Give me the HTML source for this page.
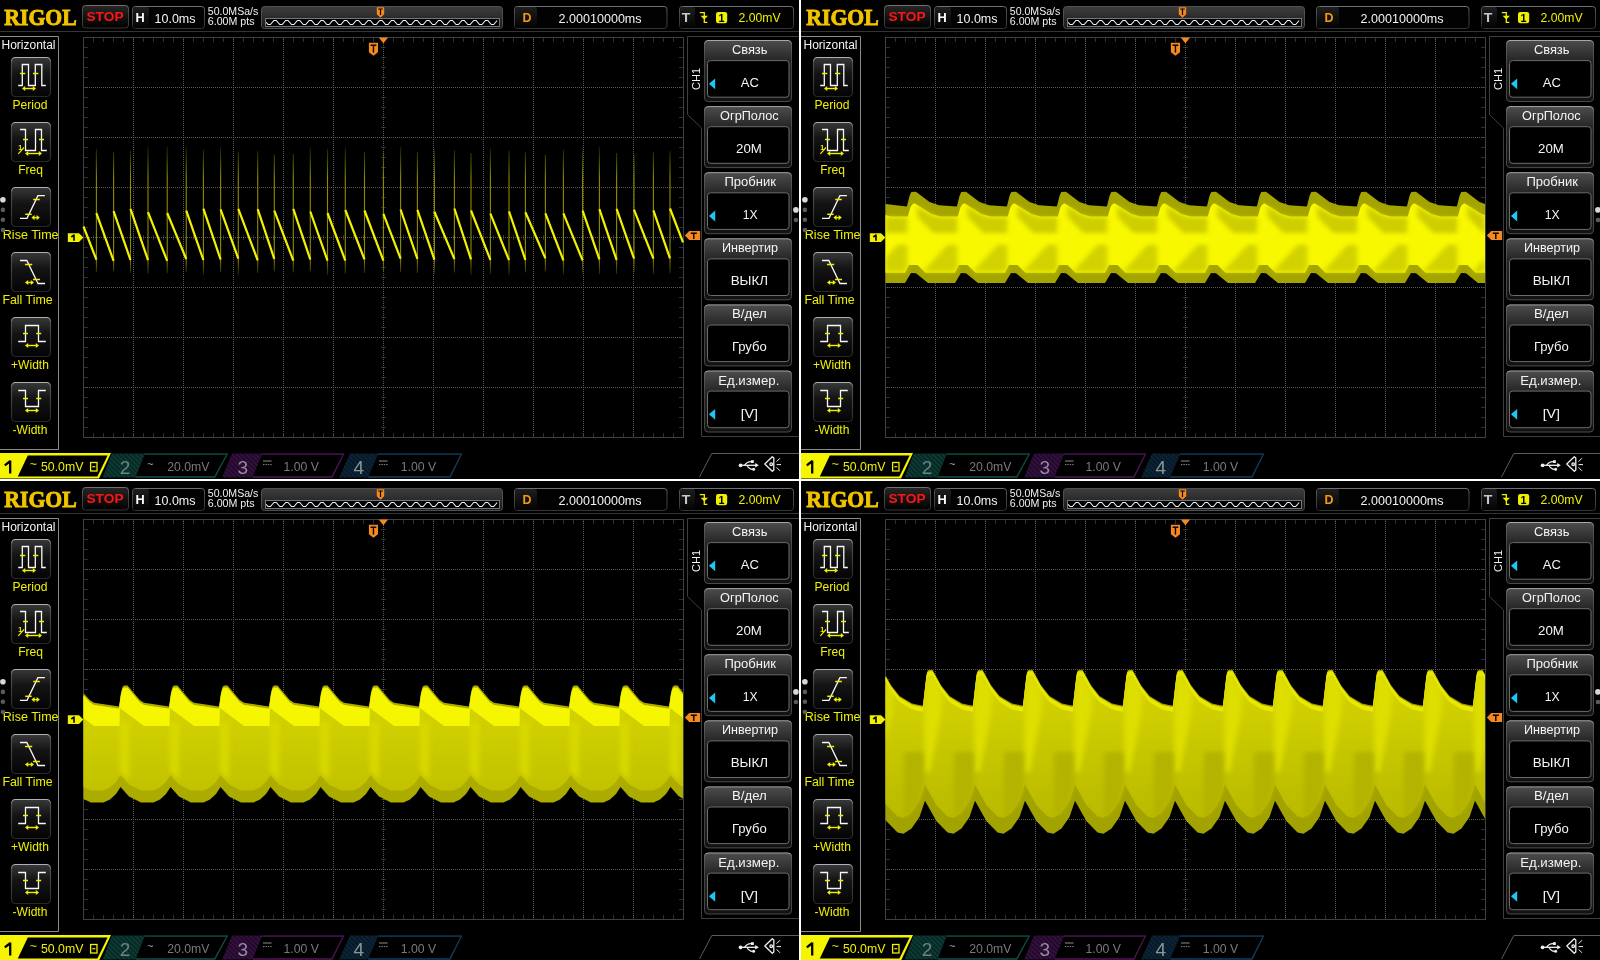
<!DOCTYPE html>
<html><head><meta charset="utf-8"><title>Rigol</title>
<style>html,body{margin:0;padding:0;background:#000;width:1600px;height:960px;overflow:hidden}svg{display:block;opacity:0.999} text.logo{stroke:#f2c400;stroke-width:0.9px}</style>
</head><body>
<svg width="1600" height="960" viewBox="0 0 1600 960" font-family='"Liberation Sans", sans-serif'>
<defs>
<linearGradient id="gBR" gradientUnits="userSpaceOnUse" x1="0" y1="190" x2="0" y2="345"><stop offset="0" stop-color="#d6d600"/><stop offset="1" stop-color="#b8b800"/></linearGradient>
<linearGradient id="gBL" gradientUnits="userSpaceOnUse" x1="0" y1="230" x2="0" y2="315"><stop offset="0" stop-color="#d2d200"/><stop offset="1" stop-color="#c0c000"/></linearGradient>
<linearGradient id="gBox" x1="0" y1="0" x2="0" y2="1"><stop offset="0" stop-color="#262626"/><stop offset="1" stop-color="#000"/></linearGradient>
<linearGradient id="gBoxS" x1="0" y1="0" x2="0" y2="1"><stop offset="0" stop-color="#707070"/><stop offset="0.3" stop-color="#4a4a4a"/><stop offset="1" stop-color="#343434"/></linearGradient>
<linearGradient id="gLbl" x1="0" y1="0" x2="0" y2="1"><stop offset="0" stop-color="#1e1e1e"/><stop offset="1" stop-color="#030303"/></linearGradient>
<linearGradient id="gOv" x1="0" y1="0" x2="0" y2="1"><stop offset="0" stop-color="#3e3e3e"/><stop offset="1" stop-color="#181818"/></linearGradient>
<linearGradient id="gBtn" x1="0" y1="0" x2="0" y2="1"><stop offset="0" stop-color="#383838"/><stop offset="0.4" stop-color="#141414"/><stop offset="1" stop-color="#040404"/></linearGradient>
<linearGradient id="gBtnS" x1="0" y1="0" x2="0" y2="1"><stop offset="0" stop-color="#b0b0b0"/><stop offset="0.12" stop-color="#505050"/><stop offset="1" stop-color="#282828"/></linearGradient>
<linearGradient id="gGrp" x1="0" y1="0" x2="0" y2="1"><stop offset="0" stop-color="#4c4c4c"/><stop offset="0.33" stop-color="#262626"/><stop offset="1" stop-color="#121212"/></linearGradient>
<linearGradient id="gGrpS" x1="0" y1="0" x2="0" y2="1"><stop offset="0" stop-color="#a8a8a8"/><stop offset="0.08" stop-color="#5a5a5a"/><stop offset="0.5" stop-color="#404040"/><stop offset="1" stop-color="#4a4a4a"/></linearGradient>
<pattern id="hatch0" width="3.4" height="4" patternUnits="userSpaceOnUse" patternTransform="rotate(-45)"><rect width="3.4" height="4" fill="#0c3a35"/><rect width="1.4" height="4" fill="#072420"/></pattern>
<pattern id="hatch1" width="3.4" height="4" patternUnits="userSpaceOnUse" patternTransform="rotate(-45)"><rect width="3.4" height="4" fill="#341040"/><rect width="1.4" height="4" fill="#1e0826"/></pattern>
<pattern id="hatch2" width="3.4" height="4" patternUnits="userSpaceOnUse" patternTransform="rotate(-45)"><rect width="3.4" height="4" fill="#0c2438"/><rect width="1.4" height="4" fill="#071624"/></pattern>
<linearGradient id="gSpike" gradientUnits="userSpaceOnUse" x1="0" y1="145" x2="0" y2="278"><stop offset="0" stop-color="#808000" stop-opacity="0.15"/><stop offset="0.25" stop-color="#8c8c00"/><stop offset="0.85" stop-color="#8c8c00"/><stop offset="1" stop-color="#808000" stop-opacity="0.1"/></linearGradient>
<filter id="soft" x="-5%" y="-20%" width="110%" height="140%"><feGaussianBlur stdDeviation="2.5 2"/></filter>
<clipPath id="pc"><rect x="-1" y="-1" width="800" height="480"/></clipPath>

<g id="pstatic"><text x="4.30" y="25.00" font-size="24" fill="#f2c400" font-weight="bold" font-family='"Liberation Serif", serif' textLength="72.40" lengthAdjust="spacingAndGlyphs" stroke="#f2c400" stroke-width="0.9" class="logo">RIGOL</text>
<rect x="82.5" y="5.5" width="46" height="22.5" rx="3" fill="url(#gBox)" stroke="url(#gBoxS)"/>
<text x="86.50" y="21.20" font-size="13.6" fill="#ff1515" font-weight="bold" textLength="37.00" lengthAdjust="spacingAndGlyphs">STOP</text>
<rect x="132.5" y="6.5" width="72" height="22" rx="3" fill="#020202" stroke="url(#gBoxS)"/>
<rect x="133" y="7" width="16" height="21" rx="2" fill="url(#gLbl)"/>
<text x="135.50" y="22.00" font-size="13" fill="#ffffff" font-weight="bold" textLength="9.20" lengthAdjust="spacingAndGlyphs">H</text>
<text x="154.50" y="23.10" font-size="12.4" fill="#f4f4f4" textLength="41.00" lengthAdjust="spacingAndGlyphs">10.0ms</text>
<text x="207.80" y="14.60" font-size="10.2" fill="#f0f0f0" textLength="50.50" lengthAdjust="spacingAndGlyphs">50.0MSa/s</text>
<text x="207.80" y="25.30" font-size="10.2" fill="#f0f0f0" textLength="46.80" lengthAdjust="spacingAndGlyphs">6.00M pts</text>
<rect x="261.5" y="6.5" width="241" height="22" rx="3" fill="url(#gOv)" stroke="#505050"/>
<rect x="265.5" y="18.5" width="234" height="8" fill="#000" stroke="#707884"/>
<polyline fill="none" stroke="#f4f4f4" stroke-width="1.1" points="266.20,22.30 268.05,24.50 270.45,24.50 273.93,20.50 276.32,20.50 279.80,24.50 282.20,24.50 285.68,20.50 288.07,20.50 291.55,24.50 293.95,24.50 297.43,20.50 299.82,20.50 303.30,24.50 305.70,24.50 309.18,20.50 311.57,20.50 315.05,24.50 317.45,24.50 320.93,20.50 323.32,20.50 326.80,24.50 329.20,24.50 332.68,20.50 335.07,20.50 338.55,24.50 340.95,24.50 344.43,20.50 346.82,20.50 350.30,24.50 352.70,24.50 356.18,20.50 358.57,20.50 362.05,24.50 364.45,24.50 367.93,20.50 370.32,20.50 373.80,24.50 376.20,24.50 379.68,20.50 382.07,20.50 385.55,24.50 387.95,24.50 391.43,20.50 393.82,20.50 397.30,24.50 399.70,24.50 403.18,20.50 405.57,20.50 409.05,24.50 411.45,24.50 414.93,20.50 417.32,20.50 420.80,24.50 423.20,24.50 426.68,20.50 429.07,20.50 432.55,24.50 434.95,24.50 438.43,20.50 440.82,20.50 444.30,24.50 446.70,24.50 450.18,20.50 452.57,20.50 456.05,24.50 458.45,24.50 461.93,20.50 464.32,20.50 467.80,24.50 470.20,24.50 473.68,20.50 476.07,20.50 479.55,24.50 481.95,24.50 485.43,20.50 487.82,20.50 491.30,24.50 493.70,24.50 497.18,20.50"/>
<path d="M376.8 7.2 H384.2 V14.2 L380.5 17.8 L376.8 14.2 Z" fill="#f5891f"/>
<path d="M378.2 9 H382.8 M380.5 9 V15" stroke="#000" stroke-width="1.2"/>
<rect x="514.5" y="6.5" width="152.5" height="22" rx="3" fill="#020202" stroke="url(#gBoxS)"/>
<rect x="515" y="7" width="22" height="21" rx="2" fill="url(#gLbl)"/>
<text x="522.60" y="21.80" font-size="13" fill="#f59a10" font-weight="bold" textLength="9.00" lengthAdjust="spacingAndGlyphs">D</text>
<text x="558.60" y="22.90" font-size="12.4" fill="#f4f4f4" textLength="83.00" lengthAdjust="spacingAndGlyphs">2.00010000ms</text>
<rect x="679.5" y="6.5" width="114" height="22" rx="3" fill="#020202" stroke="url(#gBoxS)"/>
<rect x="680" y="7" width="15" height="21" rx="2" fill="url(#gLbl)"/>
<text x="681.80" y="21.80" font-size="13" fill="#c8c8c8" font-weight="bold" textLength="8.60" lengthAdjust="spacingAndGlyphs">T</text>
<path d="M699.8 12.7 H704.3 V22.4 H707.3" fill="none" stroke="#f0f000" stroke-width="1.3"/>
<path d="M700.6 15.8 H708 L704.3 19.6 Z" fill="#f0f000"/>
<rect x="716" y="12" width="11.2" height="11.2" rx="2.2" fill="#f0f000"/>
<text x="718.60" y="21.80" font-size="11" fill="#000" font-weight="bold" textLength="6.00" lengthAdjust="spacingAndGlyphs">1</text>
<text x="738.60" y="22.20" font-size="12.4" fill="#f0f000" textLength="42.00" lengthAdjust="spacingAndGlyphs">2.00mV</text>
<path d="M-1 31.5 H799" stroke="#343434" stroke-width="1"/>
<path d="M-1 36.5 H58.5 V449.5 H-1" fill="none" stroke="#8a8a8a" stroke-width="1"/>
<text x="1.50" y="49.00" font-size="12" fill="#f4f4f4" textLength="54.00" lengthAdjust="spacingAndGlyphs">Horizontal</text>
<rect x="11.5" y="57.5" width="39" height="39" rx="4" fill="url(#gBtn)" stroke="url(#gBtnS)" stroke-width="1.2"/>
<text x="12.50" y="109.00" font-size="12" fill="#f0f000" textLength="34.90" lengthAdjust="spacingAndGlyphs">Period</text>
<rect x="11.5" y="122.5" width="39" height="39" rx="4" fill="url(#gBtn)" stroke="url(#gBtnS)" stroke-width="1.2"/>
<text x="18.20" y="174.00" font-size="12" fill="#f0f000" textLength="24.80" lengthAdjust="spacingAndGlyphs">Freq</text>
<rect x="11.5" y="187.5" width="39" height="39" rx="4" fill="url(#gBtn)" stroke="url(#gBtnS)" stroke-width="1.2"/>
<text x="2.80" y="239.00" font-size="12" fill="#f0f000" textLength="55.80" lengthAdjust="spacingAndGlyphs">Rise Time</text>
<rect x="11.5" y="252.5" width="39" height="39" rx="4" fill="url(#gBtn)" stroke="url(#gBtnS)" stroke-width="1.2"/>
<text x="2.40" y="304.00" font-size="12" fill="#f0f000" textLength="50.30" lengthAdjust="spacingAndGlyphs">Fall Time</text>
<rect x="11.5" y="317.5" width="39" height="39" rx="4" fill="url(#gBtn)" stroke="url(#gBtnS)" stroke-width="1.2"/>
<text x="11.10" y="369.00" font-size="12" fill="#f0f000" textLength="37.80" lengthAdjust="spacingAndGlyphs">+Width</text>
<rect x="11.5" y="382.5" width="39" height="39" rx="4" fill="url(#gBtn)" stroke="url(#gBtnS)" stroke-width="1.2"/>
<text x="12.60" y="434.00" font-size="12" fill="#f0f000" textLength="34.80" lengthAdjust="spacingAndGlyphs">-Width</text>
<path d="M18.2 85.5 H22.3 V64.5 H28.5 V85.5 H35.3 V64.5 H41.8 V85.5 H45.8" fill="none" stroke="#f8f8f8" stroke-width="1.3" stroke-linejoin="miter"/>
<path d="M20 73.5 H25.3" stroke="#f0f000" stroke-width="1.5"/>
<path d="M33 73.5 H38.3" stroke="#f0f000" stroke-width="1.5"/>
<path d="M24 88.5 H34" stroke="#f0f000" stroke-width="1.4"/>
<path d="M22 88.5 L25.2 85.9 V91.1 Z M36 88.5 L32.8 85.9 V91.1 Z" fill="#f0f000"/>
<path d="M20 129.5 H25.5 V150.5 H35.5 V129.5 H41.5 V150.5 H46.8" fill="none" stroke="#f8f8f8" stroke-width="1.3" stroke-linejoin="miter"/>
<path d="M23 139.5 H28" stroke="#f0f000" stroke-width="1.5"/>
<path d="M39 139.5 H44" stroke="#f0f000" stroke-width="1.5"/>
<path d="M27 153.5 H40" stroke="#f0f000" stroke-width="1.4"/>
<path d="M25 153.5 L28.2 150.9 V156.1 Z M42 153.5 L38.8 150.9 V156.1 Z" fill="#f0f000"/>
<path d="M18.3 153.8 L24 147.5" stroke="#f0f000" stroke-width="1.2"/>
<text x="18.20" y="149.50" font-size="7" fill="#f0f000" font-weight="bold" textLength="4.00" lengthAdjust="spacingAndGlyphs">1</text>
<path d="M20 218.3 H27 L37.9 195.7 H44.9" fill="none" stroke="#f8f8f8" stroke-width="1.3" stroke-linejoin="miter"/>
<path d="M33.2 199.5 H39.8" stroke="#f0f000" stroke-width="1.5"/>
<path d="M25.2 214.3 H31.7" stroke="#f0f000" stroke-width="1.5"/>
<path d="M33.4 217.6 H37.8" stroke="#f0f000" stroke-width="1.4"/>
<path d="M31.4 217.6 L34.6 215.0 V220.2 Z M39.8 217.6 L36.599999999999994 215.0 V220.2 Z" fill="#f0f000"/>
<path d="M20 260.5 H26.8 L38 283.5 H45" fill="none" stroke="#f8f8f8" stroke-width="1.3" stroke-linejoin="miter"/>
<path d="M25 264.5 H32.2" stroke="#f0f000" stroke-width="1.5"/>
<path d="M33 279.5 H40" stroke="#f0f000" stroke-width="1.5"/>
<path d="M27 282.5 H32" stroke="#f0f000" stroke-width="1.4"/>
<path d="M25 282.5 L28.2 279.9 V285.1 Z M34 282.5 L30.8 279.9 V285.1 Z" fill="#f0f000"/>
<path d="M18.2 341.5 H25.5 V325.5 H38.5 V341.5 H45.8" fill="none" stroke="#f8f8f8" stroke-width="1.3" stroke-linejoin="miter"/>
<path d="M23 333.5 H28" stroke="#f0f000" stroke-width="1.5"/>
<path d="M36.2 333.5 H41.2" stroke="#f0f000" stroke-width="1.5"/>
<path d="M27 345.5 H37" stroke="#f0f000" stroke-width="1.4"/>
<path d="M25 345.5 L28.2 342.9 V348.1 Z M39 345.5 L35.8 342.9 V348.1 Z" fill="#f0f000"/>
<path d="M18.2 390.5 H25.5 V406.5 H38.5 V390.5 H45.8" fill="none" stroke="#f8f8f8" stroke-width="1.3" stroke-linejoin="miter"/>
<path d="M23 398.5 H28" stroke="#f0f000" stroke-width="1.5"/>
<path d="M36.2 398.5 H41.2" stroke="#f0f000" stroke-width="1.5"/>
<path d="M27 410.5 H37" stroke="#f0f000" stroke-width="1.4"/>
<path d="M25 410.5 L28.2 407.9 V413.1 Z M39 410.5 L35.8 407.9 V413.1 Z" fill="#f0f000"/>
<circle cx="2.9" cy="199.7" r="2.8" fill="#d8d8d8"/>
<circle cx="2.9" cy="209.9" r="2.3" fill="#5a5a5a"/>
<circle cx="2.9" cy="219.8" r="2.3" fill="#5a5a5a"/>
<circle cx="2.9" cy="230" r="2.3" fill="#5a5a5a"/>
<path d="M93.5 38 V42 M93.5 433 V437 M103.5 38 V42 M103.5 433 V437 M113.5 38 V42 M113.5 433 V437 M123.5 38 V42 M123.5 433 V437 M133.5 38 V42 M133.5 433 V437 M143.5 38 V42 M143.5 433 V437 M153.5 38 V42 M153.5 433 V437 M163.5 38 V42 M163.5 433 V437 M173.5 38 V42 M173.5 433 V437 M183.5 38 V42 M183.5 433 V437 M193.5 38 V42 M193.5 433 V437 M203.5 38 V42 M203.5 433 V437 M213.5 38 V42 M213.5 433 V437 M223.5 38 V42 M223.5 433 V437 M233.5 38 V42 M233.5 433 V437 M243.5 38 V42 M243.5 433 V437 M253.5 38 V42 M253.5 433 V437 M263.5 38 V42 M263.5 433 V437 M273.5 38 V42 M273.5 433 V437 M283.5 38 V42 M283.5 433 V437 M293.5 38 V42 M293.5 433 V437 M303.5 38 V42 M303.5 433 V437 M313.5 38 V42 M313.5 433 V437 M323.5 38 V42 M323.5 433 V437 M333.5 38 V42 M333.5 433 V437 M343.5 38 V42 M343.5 433 V437 M353.5 38 V42 M353.5 433 V437 M363.5 38 V42 M363.5 433 V437 M373.5 38 V42 M373.5 433 V437 M383.5 38 V42 M383.5 433 V437 M393.5 38 V42 M393.5 433 V437 M403.5 38 V42 M403.5 433 V437 M413.5 38 V42 M413.5 433 V437 M423.5 38 V42 M423.5 433 V437 M433.5 38 V42 M433.5 433 V437 M443.5 38 V42 M443.5 433 V437 M453.5 38 V42 M453.5 433 V437 M463.5 38 V42 M463.5 433 V437 M473.5 38 V42 M473.5 433 V437 M483.5 38 V42 M483.5 433 V437 M493.5 38 V42 M493.5 433 V437 M503.5 38 V42 M503.5 433 V437 M513.5 38 V42 M513.5 433 V437 M523.5 38 V42 M523.5 433 V437 M533.5 38 V42 M533.5 433 V437 M543.5 38 V42 M543.5 433 V437 M553.5 38 V42 M553.5 433 V437 M563.5 38 V42 M563.5 433 V437 M573.5 38 V42 M573.5 433 V437 M583.5 38 V42 M583.5 433 V437 M593.5 38 V42 M593.5 433 V437 M603.5 38 V42 M603.5 433 V437 M613.5 38 V42 M613.5 433 V437 M623.5 38 V42 M623.5 433 V437 M633.5 38 V42 M633.5 433 V437 M643.5 38 V42 M643.5 433 V437 M653.5 38 V42 M653.5 433 V437 M663.5 38 V42 M663.5 433 V437 M673.5 38 V42 M673.5 433 V437 M84 47.5 H88 M679 47.5 H683 M84 57.5 H88 M679 57.5 H683 M84 67.5 H88 M679 67.5 H683 M84 77.5 H88 M679 77.5 H683 M84 87.5 H88 M679 87.5 H683 M84 97.5 H88 M679 97.5 H683 M84 107.5 H88 M679 107.5 H683 M84 117.5 H88 M679 117.5 H683 M84 127.5 H88 M679 127.5 H683 M84 137.5 H88 M679 137.5 H683 M84 147.5 H88 M679 147.5 H683 M84 157.5 H88 M679 157.5 H683 M84 167.5 H88 M679 167.5 H683 M84 177.5 H88 M679 177.5 H683 M84 187.5 H88 M679 187.5 H683 M84 197.5 H88 M679 197.5 H683 M84 207.5 H88 M679 207.5 H683 M84 217.5 H88 M679 217.5 H683 M84 227.5 H88 M679 227.5 H683 M84 237.5 H88 M679 237.5 H683 M84 247.5 H88 M679 247.5 H683 M84 257.5 H88 M679 257.5 H683 M84 267.5 H88 M679 267.5 H683 M84 277.5 H88 M679 277.5 H683 M84 287.5 H88 M679 287.5 H683 M84 297.5 H88 M679 297.5 H683 M84 307.5 H88 M679 307.5 H683 M84 317.5 H88 M679 317.5 H683 M84 327.5 H88 M679 327.5 H683 M84 337.5 H88 M679 337.5 H683 M84 347.5 H88 M679 347.5 H683 M84 357.5 H88 M679 357.5 H683 M84 367.5 H88 M679 367.5 H683 M84 377.5 H88 M679 377.5 H683 M84 387.5 H88 M679 387.5 H683 M84 397.5 H88 M679 397.5 H683 M84 407.5 H88 M679 407.5 H683 M84 417.5 H88 M679 417.5 H683 M84 427.5 H88 M679 427.5 H683 M93.5 235 V240 M103.5 235 V240 M113.5 235 V240 M123.5 235 V240 M133.5 235 V240 M143.5 235 V240 M153.5 235 V240 M163.5 235 V240 M173.5 235 V240 M183.5 235 V240 M193.5 235 V240 M203.5 235 V240 M213.5 235 V240 M223.5 235 V240 M233.5 235 V240 M243.5 235 V240 M253.5 235 V240 M263.5 235 V240 M273.5 235 V240 M283.5 235 V240 M293.5 235 V240 M303.5 235 V240 M313.5 235 V240 M323.5 235 V240 M333.5 235 V240 M343.5 235 V240 M353.5 235 V240 M363.5 235 V240 M373.5 235 V240 M383.5 235 V240 M393.5 235 V240 M403.5 235 V240 M413.5 235 V240 M423.5 235 V240 M433.5 235 V240 M443.5 235 V240 M453.5 235 V240 M463.5 235 V240 M473.5 235 V240 M483.5 235 V240 M493.5 235 V240 M503.5 235 V240 M513.5 235 V240 M523.5 235 V240 M533.5 235 V240 M543.5 235 V240 M553.5 235 V240 M563.5 235 V240 M573.5 235 V240 M583.5 235 V240 M593.5 235 V240 M603.5 235 V240 M613.5 235 V240 M623.5 235 V240 M633.5 235 V240 M643.5 235 V240 M653.5 235 V240 M663.5 235 V240 M673.5 235 V240 M381 47.5 H386 M381 57.5 H386 M381 67.5 H386 M381 77.5 H386 M381 87.5 H386 M381 97.5 H386 M381 107.5 H386 M381 117.5 H386 M381 127.5 H386 M381 137.5 H386 M381 147.5 H386 M381 157.5 H386 M381 167.5 H386 M381 177.5 H386 M381 187.5 H386 M381 197.5 H386 M381 207.5 H386 M381 217.5 H386 M381 227.5 H386 M381 237.5 H386 M381 247.5 H386 M381 257.5 H386 M381 267.5 H386 M381 277.5 H386 M381 287.5 H386 M381 297.5 H386 M381 307.5 H386 M381 317.5 H386 M381 327.5 H386 M381 337.5 H386 M381 347.5 H386 M381 357.5 H386 M381 367.5 H386 M381 377.5 H386 M381 387.5 H386 M381 397.5 H386 M381 407.5 H386 M381 417.5 H386 M381 427.5 H386" stroke="#2e2e2e" stroke-width="1"/>
<path d="M133.5 39 V437 M183.5 39 V437 M233.5 39 V437 M283.5 39 V437 M333.5 39 V437 M383.5 39 V437 M433.5 39 V437 M483.5 39 V437 M533.5 39 V437 M583.5 39 V437 M633.5 39 V437 M85 87.5 H683 M85 137.5 H683 M85 187.5 H683 M85 237.5 H683 M85 287.5 H683 M85 337.5 H683 M85 387.5 H683" stroke="#5a5a5a" stroke-width="1" stroke-dasharray="1 1"/>
<rect x="83.5" y="37.5" width="600" height="400" fill="none" stroke="#404040"/>
<path d="M799 36.5 H687.5 V114.5 L701.5 128 V436.5 H799" fill="none" stroke="#3e3e3e" stroke-width="1"/>
<text x="0" y="0" font-size="11.5" fill="#f4f4f4" textLength="22.2" lengthAdjust="spacingAndGlyphs" transform="translate(700.2,90) rotate(-90)">CH1</text>
<rect x="704.5" y="40.50" width="87" height="61" rx="3.5" fill="url(#gGrp)" stroke="url(#gGrpS)"/>
<rect x="707.5" y="60.60" width="81.5" height="36.6" rx="3" fill="#000" stroke="#6c6c6c"/>
<text x="731.90" y="54.00" font-size="12.6" fill="#f4f4f4" textLength="35.60" lengthAdjust="spacingAndGlyphs">Связь</text>
<text x="740.70" y="87.00" font-size="12.6" fill="#f4f4f4" textLength="18.10" lengthAdjust="spacingAndGlyphs">AC</text>
<path d="M715.2 78.40 L708.9 83.80 L715.2 89.20 Z" fill="#1ec6f2"/>
<rect x="704.5" y="106.60" width="87" height="61" rx="3.5" fill="url(#gGrp)" stroke="url(#gGrpS)"/>
<rect x="707.5" y="126.70" width="81.5" height="36.6" rx="3" fill="#000" stroke="#6c6c6c"/>
<text x="720.10" y="120.10" font-size="12.6" fill="#f4f4f4" textLength="58.60" lengthAdjust="spacingAndGlyphs">ОгрПолос</text>
<text x="736.10" y="153.10" font-size="12.6" fill="#f4f4f4" textLength="25.80" lengthAdjust="spacingAndGlyphs">20M</text>
<rect x="704.5" y="172.70" width="87" height="61" rx="3.5" fill="url(#gGrp)" stroke="url(#gGrpS)"/>
<rect x="707.5" y="192.80" width="81.5" height="36.6" rx="3" fill="#000" stroke="#6c6c6c"/>
<text x="724.40" y="186.20" font-size="12.6" fill="#f4f4f4" textLength="51.60" lengthAdjust="spacingAndGlyphs">Пробник</text>
<text x="742.70" y="219.20" font-size="12.6" fill="#f4f4f4" textLength="14.90" lengthAdjust="spacingAndGlyphs">1X</text>
<path d="M715.2 210.60 L708.9 216.00 L715.2 221.40 Z" fill="#1ec6f2"/>
<rect x="704.5" y="238.80" width="87" height="61" rx="3.5" fill="url(#gGrp)" stroke="url(#gGrpS)"/>
<rect x="707.5" y="258.90" width="81.5" height="36.6" rx="3" fill="#000" stroke="#6c6c6c"/>
<text x="721.90" y="252.30" font-size="12.6" fill="#f4f4f4" textLength="56.20" lengthAdjust="spacingAndGlyphs">Инвертир</text>
<text x="730.65" y="285.30" font-size="12.6" fill="#f4f4f4" textLength="37.45" lengthAdjust="spacingAndGlyphs">ВЫКЛ</text>
<rect x="704.5" y="304.90" width="87" height="61" rx="3.5" fill="url(#gGrp)" stroke="url(#gGrpS)"/>
<rect x="707.5" y="325.00" width="81.5" height="36.6" rx="3" fill="#000" stroke="#6c6c6c"/>
<text x="731.90" y="318.40" font-size="12.6" fill="#f4f4f4" textLength="34.95" lengthAdjust="spacingAndGlyphs">В/дел</text>
<text x="731.90" y="351.40" font-size="12.6" fill="#f4f4f4" textLength="34.95" lengthAdjust="spacingAndGlyphs">Грубо</text>
<rect x="704.5" y="371.00" width="87" height="61" rx="3.5" fill="url(#gGrp)" stroke="url(#gGrpS)"/>
<rect x="707.5" y="391.10" width="81.5" height="36.6" rx="3" fill="#000" stroke="#6c6c6c"/>
<text x="718.15" y="384.50" font-size="12.6" fill="#f4f4f4" textLength="61.20" lengthAdjust="spacingAndGlyphs">Ед.измер.</text>
<text x="740.65" y="417.50" font-size="12.6" fill="#f4f4f4" textLength="17.45" lengthAdjust="spacingAndGlyphs">[V]</text>
<path d="M715.2 408.90 L708.9 414.30 L715.2 419.70 Z" fill="#1ec6f2"/>
<circle cx="795.9" cy="209.9" r="2.8" fill="#d8d8d8"/>
<circle cx="795.9" cy="220" r="2.3" fill="#5a5a5a"/>
<path d="M-1 453 H111 L99 478.6 H-1 Z" fill="#f5f500"/>
<path d="M27.8 455.6 H107.6 L97.4 476.6 H17.8 Z" fill="#000"/>
<path d="M10.2 460.6 V473.6 M4.8 465.4 L10.4 461" stroke="#000" stroke-width="2.3" fill="none"/>
<text x="29.60" y="467.50" font-size="11" fill="#f0f000" textLength="7.50" lengthAdjust="spacingAndGlyphs">~</text>
<text x="41.00" y="470.60" font-size="12.2" fill="#f0f000" textLength="42.40" lengthAdjust="spacingAndGlyphs">50.0mV</text>
<rect x="90.6" y="462.5" width="6.4" height="8.5" fill="none" stroke="#f0f000" stroke-width="1.3"/>
<path d="M92.3 466.7 H95.3" stroke="#f0f000" stroke-width="1.2"/>
<path d="M111.8 453.5 H227.75 L215.2 477.6 H102.6 Z" fill="url(#hatch0)"/>
<path d="M144.6 454.6 H226.55 L214.2 476.5 H135.9 Z" fill="#000"/>
<path d="M144.6 454.2 H227.15 L214.79999999999998 477 H135.9" fill="none" stroke="#0e4a43" stroke-width="1.3"/>
<text x="119.70" y="473.80" font-size="18.5" fill="#6c8480" textLength="10.60" lengthAdjust="spacingAndGlyphs">2</text>
<text x="147.00" y="468.00" font-size="10" fill="#a0a0a0" textLength="6.50" lengthAdjust="spacingAndGlyphs">~</text>
<text x="167.30" y="470.90" font-size="12.3" fill="#7a7a7a" textLength="42.20" lengthAdjust="spacingAndGlyphs">20.0mV</text>
<path d="M232.0 453.5 H344.0 L332.4 477.6 H222.1 Z" fill="url(#hatch1)"/>
<path d="M262.0 454.6 H342.8 L331.4 476.5 H252.8 Z" fill="#000"/>
<path d="M262.0 454.2 H343.4 L332.0 477 H252.8" fill="none" stroke="#4a1450" stroke-width="1.3"/>
<text x="237.60" y="473.80" font-size="18.5" fill="#948aa0" textLength="10.60" lengthAdjust="spacingAndGlyphs">3</text>
<path d="M263.0 461 H271.6" stroke="#8c8c8c" stroke-width="1"/>
<path d="M263.0 464.6 H271.6" stroke="#8c8c8c" stroke-width="1" stroke-dasharray="1.4 1"/>
<text x="283.50" y="470.90" font-size="12.3" fill="#7a7a7a" textLength="35.40" lengthAdjust="spacingAndGlyphs">1.00 V</text>
<path d="M350.0 453.5 H462.0 L450.4 477.6 H339.1 Z" fill="url(#hatch2)"/>
<path d="M378.0 454.6 H460.8 L449.4 476.5 H368.4 Z" fill="#000"/>
<path d="M378.0 454.2 H461.4 L450.0 477 H368.4" fill="none" stroke="#123a5a" stroke-width="1.3"/>
<text x="353.60" y="473.80" font-size="18.5" fill="#889898" textLength="10.60" lengthAdjust="spacingAndGlyphs">4</text>
<path d="M379.0 461 H387.6" stroke="#8c8c8c" stroke-width="1"/>
<path d="M379.0 464.6 H387.6" stroke="#8c8c8c" stroke-width="1" stroke-dasharray="1.4 1"/>
<text x="400.75" y="470.90" font-size="12.3" fill="#7a7a7a" textLength="35.40" lengthAdjust="spacingAndGlyphs">1.00 V</text>
<path d="M699.5 477 L711.8 453.5 H799" fill="none" stroke="#5c5c5c" stroke-width="1"/>
<g fill="#f0f0f0" stroke="#f0f0f0"><path d="M741 465.3 H756" stroke-width="1.3" fill="none"/><circle cx="740.6" cy="465.3" r="1.9" stroke="none"/><path d="M755.2 463 L758.8 465.3 L755.2 467.6 Z" stroke="none"/><path d="M744.5 465.3 Q747 461.6 751 461.6" fill="none" stroke-width="1.2"/><rect x="751" y="460.2" width="2.8" height="2.8" stroke="none"/><path d="M747 465.3 Q749 469.4 752.5 469.4" fill="none" stroke-width="1.2"/><circle cx="753.6" cy="469.3" r="1.5" stroke="none"/></g>
<g fill="none" stroke="#f0f0f0" stroke-width="1.3"><path d="M764.8 464 L772.3 456.8 L773.8 458 V470 L772.3 471.3 Z" stroke-linejoin="round"/><circle cx="771.2" cy="464.2" r="1.3"/><path d="M776.6 461.6 L780 458.2 M776.6 464.6 H781 M776.6 467.4 L780 470.8" stroke-width="1"/></g></g>
<g id="pmark"><path d="M378.7 37.6 H388.1 L383.4 43.2 Z" fill="#f5891f"/>
<path d="M368.9 42.8 H378 V52.3 L373.45 55.8 L368.9 52.3 Z" fill="#f5891f"/>
<path d="M370.6 45.3 H376.3 M373.45 45.3 V52.5" stroke="#000" stroke-width="1.4"/>
<path d="M67.8 233.2 H79 L83.4 237.6 L79 242 H67.8 Z" fill="#f0f000"/>
<path d="M74 234.6 V240.8 M71.3 237 L74.2 234.8" stroke="#000" stroke-width="1.6" fill="none"/>
<path d="M684.9 235.4 L689.2 230.9 H700.1 V239.9 H689.2 Z" fill="#f5891f"/>
<path d="M690.8 233.2 H696.8 M693.8 233.2 V239" stroke="#000" stroke-width="1.4"/></g>
</defs>
<rect width="1600" height="960" fill="#000"/>
<g transform="translate(0,0)" clip-path="url(#pc)">
<use href="#pstatic"/>
<path d="M96.40 148.9 V271.8 M113.60 151.9 V271.4 M130.50 150.8 V272.8 M148.00 146.5 V273.5 M167.20 146.3 V273.2 M186.25 146.6 V271.5 M203.40 149.8 V275.1 M220.60 147.1 V272.1 M238.30 151.6 V275.7 M257.70 151.2 V273.0 M274.30 154.8 V271.2 M293.30 153.7 V272.4 M310.30 147.3 V271.6 M327.50 148.8 V275.1 M345.30 147.6 V273.9 M364.50 151.8 V272.9 M383.40 150.9 V271.3 M400.60 146.5 V272.0 M417.40 152.1 V273.1 M434.40 148.8 V273.9 M454.40 150.1 V272.5 M471.00 153.1 V274.5 M490.40 148.2 V273.9 M509.00 150.7 V275.4 M525.40 152.6 V272.4 M545.40 154.8 V271.6 M563.40 149.8 V274.8 M582.60 147.4 V273.4 M599.40 146.4 V274.3 M616.60 152.9 V273.9 M634.00 153.9 V272.6 M653.40 152.3 V274.0 M670.00 151.2 V273.3" stroke="url(#gSpike)" stroke-width="1.1" fill="none"/>
<path d="M83.5 226.5 L96.4 259.7 M96.40 213.1 L113.60 260.8 M113.60 211.1 L130.50 260.0 M130.50 208.8 L148.00 260.1 M148.00 212.1 L167.20 260.9 M167.20 213.0 L186.25 259.0 M186.25 210.6 L203.40 260.0 M203.40 208.6 L220.60 259.5 M220.60 209.4 L238.30 258.6 M238.30 208.8 L257.70 260.3 M257.70 209.2 L274.30 258.9 M274.30 210.7 L293.30 260.6 M293.30 208.9 L310.30 259.5 M310.30 211.5 L327.50 260.6 M327.50 213.0 L345.30 260.5 M345.30 210.0 L364.50 259.4 M364.50 210.5 L383.40 260.6 M383.40 213.8 L400.60 258.7 M400.60 209.5 L417.40 258.9 M417.40 209.8 L434.40 259.6 M434.40 211.7 L454.40 259.0 M454.40 208.5 L471.00 259.4 M471.00 210.5 L490.40 259.8 M490.40 213.7 L509.00 260.1 M509.00 211.3 L525.40 259.9 M525.40 212.2 L545.40 258.4 M545.40 213.4 L563.40 260.3 M563.40 213.3 L582.60 260.4 M582.60 210.7 L599.40 259.3 M599.40 209.1 L616.60 259.9 M616.60 208.8 L634.00 258.5 M634.00 209.6 L653.40 258.7 M653.40 210.4 L670.00 258.4 M670.00 208.5 L683.00 242.3" stroke="#f2f200" stroke-width="2.2" fill="none" stroke-linecap="butt"/>
<use href="#pmark"/>
</g>
<g transform="translate(802,0)" clip-path="url(#pc)">
<use href="#pstatic"/>
<clipPath id="bclip1"><path d="M83.5 204.1L104.5 206.6L105 206L107.5 195.9L109 192.6L109.5 192L114 191.7L127.5 202L137 205.3L154.5 206.6L155 206L157.5 195.9L159 192.6L159.5 192L164 191.7L177.5 202L187 205.3L204.5 206.6L205 206L207.5 195.9L209 192.6L209.5 192L214 191.7L227.5 202L237 205.3L254.5 206.6L255 206L257.5 195.9L259 192.6L259.5 192L264 191.7L277.5 202L287 205.3L304.5 206.6L305 206L307.5 195.9L309 192.6L309.5 192L314 191.7L327.5 202L337 205.3L354.5 206.6L355 206L357.5 195.9L359 192.6L359.5 192L364 191.7L377.5 202L387 205.3L404.5 206.6L405 206L407.5 195.9L409 192.6L409.5 192L414 191.7L427.5 202L437 205.3L454.5 206.6L455 206L457.5 195.9L459 192.6L459.5 192L464 191.7L477.5 202L487 205.3L504.5 206.6L505 206L507.5 195.9L509 192.6L509.5 192L514 191.7L527.5 202L537 205.3L554.5 206.6L555 206L557.5 195.9L559 192.6L559.5 192L564 191.7L577.5 202L587 205.3L604.5 206.6L605 206L607.5 195.9L609 192.6L609.5 192L614 191.7L627.5 202L637 205.3L654.5 206.6L655 206L657.5 195.9L659 192.6L659.5 192L664 191.7L677.5 202L683 203.9L683 283.1L676 283.1L664 273.3L659 273.1L653 283.1L626 283.1L614 273.3L609 273.1L603 283.1L576 283.1L564 273.3L559 273.1L553 283.1L526 283.1L514 273.3L509 273.1L503 283.1L476 283.1L464 273.3L459 273.1L453 283.1L426 283.1L414 273.3L409 273.1L403 283.1L376 283.1L364 273.3L359 273.1L353 283.1L326 283.1L314 273.3L309 273.1L303 283.1L276 283.1L264 273.3L259 273.1L253 283.1L226 283.1L214 273.3L209 273.1L203 283.1L176 283.1L164 273.3L159 273.1L153 283.1L126 283.1L114 273.3L109 273.1L103 283.1L83.5 283.1Z"/></clipPath>
<path d="M83.5 204.1L104.5 206.6L105 206L107.5 195.9L109 192.6L109.5 192L114 191.7L127.5 202L137 205.3L154.5 206.6L155 206L157.5 195.9L159 192.6L159.5 192L164 191.7L177.5 202L187 205.3L204.5 206.6L205 206L207.5 195.9L209 192.6L209.5 192L214 191.7L227.5 202L237 205.3L254.5 206.6L255 206L257.5 195.9L259 192.6L259.5 192L264 191.7L277.5 202L287 205.3L304.5 206.6L305 206L307.5 195.9L309 192.6L309.5 192L314 191.7L327.5 202L337 205.3L354.5 206.6L355 206L357.5 195.9L359 192.6L359.5 192L364 191.7L377.5 202L387 205.3L404.5 206.6L405 206L407.5 195.9L409 192.6L409.5 192L414 191.7L427.5 202L437 205.3L454.5 206.6L455 206L457.5 195.9L459 192.6L459.5 192L464 191.7L477.5 202L487 205.3L504.5 206.6L505 206L507.5 195.9L509 192.6L509.5 192L514 191.7L527.5 202L537 205.3L554.5 206.6L555 206L557.5 195.9L559 192.6L559.5 192L564 191.7L577.5 202L587 205.3L604.5 206.6L605 206L607.5 195.9L609 192.6L609.5 192L614 191.7L627.5 202L637 205.3L654.5 206.6L655 206L657.5 195.9L659 192.6L659.5 192L664 191.7L677.5 202L683 203.9L683 283.1L676 283.1L664 273.3L659 273.1L653 283.1L626 283.1L614 273.3L609 273.1L603 283.1L576 283.1L564 273.3L559 273.1L553 283.1L526 283.1L514 273.3L509 273.1L503 283.1L476 283.1L464 273.3L459 273.1L453 283.1L426 283.1L414 273.3L409 273.1L403 283.1L376 283.1L364 273.3L359 273.1L353 283.1L326 283.1L314 273.3L309 273.1L303 283.1L276 283.1L264 273.3L259 273.1L253 283.1L226 283.1L214 273.3L209 273.1L203 283.1L176 283.1L164 273.3L159 273.1L153 283.1L126 283.1L114 273.3L109 273.1L103 283.1L83.5 283.1Z" fill="#a4a400"/>
<path d="M83.5 215.1L88.5 216.5L105.5 216.5L106 215.8L108.5 207L110.5 204.2L112.5 203.2L129.5 214L138.5 216.5L155.5 216.5L156 215.8L158.5 207L160.5 204.2L162.5 203.2L179.5 214L188.5 216.5L205.5 216.5L206 215.8L208.5 207L210.5 204.2L212.5 203.2L229.5 214L238.5 216.5L255.5 216.5L256 215.8L258.5 207L260.5 204.2L262.5 203.2L279.5 214L288.5 216.5L305.5 216.5L306 215.8L308.5 207L310.5 204.2L312.5 203.2L329.5 214L338.5 216.5L355.5 216.5L356 215.8L358.5 207L360.5 204.2L362.5 203.2L379.5 214L388.5 216.5L405.5 216.5L406 215.8L408.5 207L410.5 204.2L412.5 203.2L429.5 214L438.5 216.5L455.5 216.5L456 215.8L458.5 207L460.5 204.2L462.5 203.2L479.5 214L488.5 216.5L505.5 216.5L506 215.8L508.5 207L510.5 204.2L512.5 203.2L529.5 214L538.5 216.5L555.5 216.5L556 215.8L558.5 207L560.5 204.2L562.5 203.2L579.5 214L588.5 216.5L605.5 216.5L606 215.8L608.5 207L610.5 204.2L612.5 203.2L629.5 214L638.5 216.5L655.5 216.5L656 215.8L658.5 207L660.5 204.2L662.5 203.2L679.5 214L683 215L683 272.8L673.5 272.8L665.5 265L657 265L653 272.8L623.5 272.8L615.5 265L607 265L603 272.8L573.5 272.8L565.5 265L557 265L553 272.8L523.5 272.8L515.5 265L507 265L503 272.8L473.5 272.8L465.5 265L457 265L453 272.8L423.5 272.8L415.5 265L407 265L403 272.8L373.5 272.8L365.5 265L357 265L353 272.8L323.5 272.8L315.5 265L307 265L303 272.8L273.5 272.8L265.5 265L257 265L253 272.8L223.5 272.8L215.5 265L207 265L203 272.8L173.5 272.8L165.5 265L157 265L153 272.8L123.5 272.8L115.5 265L107 265L103 272.8L83.5 272.8Z" fill="#f8f800"/>
<g clip-path="url(#bclip1)"><path d="M83.5 216.1L88.5 217.5L105.5 217.5L106 216.8L108.5 208L110.5 205.2L112.5 204.2L129.5 215L138.5 217.5L155.5 217.5L156 216.8L158.5 208L160.5 205.2L162.5 204.2L179.5 215L188.5 217.5L205.5 217.5L206 216.8L208.5 208L210.5 205.2L212.5 204.2L229.5 215L238.5 217.5L255.5 217.5L256 216.8L258.5 208L260.5 205.2L262.5 204.2L279.5 215L288.5 217.5L305.5 217.5L306 216.8L308.5 208L310.5 205.2L312.5 204.2L329.5 215L338.5 217.5L355.5 217.5L356 216.8L358.5 208L360.5 205.2L362.5 204.2L379.5 215L388.5 217.5L405.5 217.5L406 216.8L408.5 208L410.5 205.2L412.5 204.2L429.5 215L438.5 217.5L455.5 217.5L456 216.8L458.5 208L460.5 205.2L462.5 204.2L479.5 215L488.5 217.5L505.5 217.5L506 216.8L508.5 208L510.5 205.2L512.5 204.2L529.5 215L538.5 217.5L555.5 217.5L556 216.8L558.5 208L560.5 205.2L562.5 204.2L579.5 215L588.5 217.5L605.5 217.5L606 216.8L608.5 208L610.5 205.2L612.5 204.2L629.5 215L638.5 217.5L655.5 217.5L656 216.8L658.5 208L660.5 205.2L662.5 204.2L679.5 215L683 216L683 233L681.5 233L665.5 217L665 205.3L662.5 204.2L660.5 205.2L658.5 208L656 216.8L655.5 217.5L655 233L631.5 233L615.5 217L615 205.3L612.5 204.2L610.5 205.2L608.5 208L606 216.8L605.5 217.5L605 233L581.5 233L565.5 217L565 205.3L562.5 204.2L560.5 205.2L558.5 208L556 216.8L555.5 217.5L555 233L531.5 233L515.5 217L515 205.3L512.5 204.2L510.5 205.2L508.5 208L506 216.8L505.5 217.5L505 233L481.5 233L465.5 217L465 205.3L462.5 204.2L460.5 205.2L458.5 208L456 216.8L455.5 217.5L455 233L431.5 233L415.5 217L415 205.3L412.5 204.2L410.5 205.2L408.5 208L406 216.8L405.5 217.5L405 233L381.5 233L365.5 217L365 205.3L362.5 204.2L360.5 205.2L358.5 208L356 216.8L355.5 217.5L355 233L331.5 233L315.5 217L315 205.3L312.5 204.2L310.5 205.2L308.5 208L306 216.8L305.5 217.5L305 233L281.5 233L265.5 217L265 205.3L262.5 204.2L260.5 205.2L258.5 208L256 216.8L255.5 217.5L255 233L231.5 233L215.5 217L215 205.3L212.5 204.2L210.5 205.2L208.5 208L206 216.8L205.5 217.5L205 233L181.5 233L165.5 217L165 205.3L162.5 204.2L160.5 205.2L158.5 208L156 216.8L155.5 217.5L155 233L131.5 233L115.5 217L115 205.3L112.5 204.2L110.5 205.2L108.5 208L106 216.8L105.5 217.5L105 233L83.5 233Z" fill="#cece00" filter="url(#soft)"/><path d="M83.5 258L95.5 245L105 245L105.5 267.5L107 264L115.5 264L120 268.4L120.5 272L145.5 245L155 245L155.5 267.5L157 264L165.5 264L170 268.4L170.5 272L195.5 245L205 245L205.5 267.5L207 264L215.5 264L220 268.4L220.5 272L245.5 245L255 245L255.5 267.5L257 264L265.5 264L270 268.4L270.5 272L295.5 245L305 245L305.5 267.5L307 264L315.5 264L320 268.4L320.5 272L345.5 245L355 245L355.5 267.5L357 264L365.5 264L370 268.4L370.5 272L395.5 245L405 245L405.5 267.5L407 264L415.5 264L420 268.4L420.5 272L445.5 245L455 245L455.5 267.5L457 264L465.5 264L470 268.4L470.5 272L495.5 245L505 245L505.5 267.5L507 264L515.5 264L520 268.4L520.5 272L545.5 245L555 245L555.5 267.5L557 264L565.5 264L570 268.4L570.5 272L595.5 245L605 245L605.5 267.5L607 264L615.5 264L620 268.4L620.5 272L645.5 245L655 245L655.5 267.5L657 264L665.5 264L670 268.4L670.5 272L683 258.5L683 271.8L673.5 271.8L665.5 264L657 264L653 271.8L623.5 271.8L615.5 264L607 264L603 271.8L573.5 271.8L565.5 264L557 264L553 271.8L523.5 271.8L515.5 264L507 264L503 271.8L473.5 271.8L465.5 264L457 264L453 271.8L423.5 271.8L415.5 264L407 264L403 271.8L373.5 271.8L365.5 264L357 264L353 271.8L323.5 271.8L315.5 264L307 264L303 271.8L273.5 271.8L265.5 264L257 264L253 271.8L223.5 271.8L215.5 264L207 264L203 271.8L173.5 271.8L165.5 264L157 264L153 271.8L123.5 271.8L115.5 264L107 264L103 271.8L83.5 271.8Z" fill="#d2d200" filter="url(#soft)"/></g>
<use href="#pmark"/>
</g>
<g transform="translate(0,482)" clip-path="url(#pc)">
<use href="#pstatic"/>
<clipPath id="bclip2"><path d="M83.5 211.2L89.5 217.7L94 220.7L119 224.5L121 210.4L122.5 204.9L124 203.5L127.5 203.5L139.5 217.7L144 220.7L169 224.5L171 210.4L172.5 204.9L174 203.5L177.5 203.5L189.5 217.7L194 220.7L219 224.5L221 210.4L222.5 204.9L224 203.5L227.5 203.5L239.5 217.7L244 220.7L269 224.5L271 210.4L272.5 204.9L274 203.5L277.5 203.5L289.5 217.7L294 220.7L319 224.5L321 210.4L322.5 204.9L324 203.5L327.5 203.5L339.5 217.7L344 220.7L369 224.5L371 210.4L372.5 204.9L374 203.5L377.5 203.5L389.5 217.7L394 220.7L419 224.5L421 210.4L422.5 204.9L424 203.5L427.5 203.5L439.5 217.7L444 220.7L469 224.5L471 210.4L472.5 204.9L474 203.5L477.5 203.5L489.5 217.7L494 220.7L519 224.5L521 210.4L522.5 204.9L524 203.5L527.5 203.5L539.5 217.7L544 220.7L569 224.5L571 210.4L572.5 204.9L574 203.5L577.5 203.5L589.5 217.7L594 220.7L619 224.5L621 210.4L622.5 204.9L624 203.5L627.5 203.5L639.5 217.7L644 220.7L669 224.5L671 210.4L672.5 204.9L674 203.5L677.5 203.5L683 210.5L683 316.8L678.5 314L671 305.4L670.5 305.1L666 312L660 317.4L653.5 320.5L641 320.4L629 314.4L621 305.4L620.5 305.1L616 312L610 317.4L603.5 320.5L591 320.4L579 314.4L571 305.4L570.5 305.1L566 312L560 317.4L553.5 320.5L541 320.4L529 314.4L521 305.4L520.5 305.1L516 312L510 317.4L503.5 320.5L491 320.4L479 314.4L471 305.4L470.5 305.1L466 312L460 317.4L453.5 320.5L441 320.4L429 314.4L421 305.4L420.5 305.1L416 312L410 317.4L403.5 320.5L391 320.4L379 314.4L371 305.4L370.5 305.1L366 312L360 317.4L353.5 320.5L341 320.4L329 314.4L321 305.4L320.5 305.1L316 312L310 317.4L303.5 320.5L291 320.4L279 314.4L271 305.4L270.5 305.1L266 312L260 317.4L253.5 320.5L241 320.4L229 314.4L221 305.4L220.5 305.1L216 312L210 317.4L203.5 320.5L191 320.4L179 314.4L171 305.4L170.5 305.1L166 312L160 317.4L153.5 320.5L141 320.4L129 314.4L121 305.4L120.5 305.1L116 312L110 317.4L103.5 320.5L91 320.4L83.5 317.1Z"/></clipPath>
<path d="M83.5 211.2L89.5 217.7L94 220.7L119 224.5L121 210.4L122.5 204.9L124 203.5L127.5 203.5L139.5 217.7L144 220.7L169 224.5L171 210.4L172.5 204.9L174 203.5L177.5 203.5L189.5 217.7L194 220.7L219 224.5L221 210.4L222.5 204.9L224 203.5L227.5 203.5L239.5 217.7L244 220.7L269 224.5L271 210.4L272.5 204.9L274 203.5L277.5 203.5L289.5 217.7L294 220.7L319 224.5L321 210.4L322.5 204.9L324 203.5L327.5 203.5L339.5 217.7L344 220.7L369 224.5L371 210.4L372.5 204.9L374 203.5L377.5 203.5L389.5 217.7L394 220.7L419 224.5L421 210.4L422.5 204.9L424 203.5L427.5 203.5L439.5 217.7L444 220.7L469 224.5L471 210.4L472.5 204.9L474 203.5L477.5 203.5L489.5 217.7L494 220.7L519 224.5L521 210.4L522.5 204.9L524 203.5L527.5 203.5L539.5 217.7L544 220.7L569 224.5L571 210.4L572.5 204.9L574 203.5L577.5 203.5L589.5 217.7L594 220.7L619 224.5L621 210.4L622.5 204.9L624 203.5L627.5 203.5L639.5 217.7L644 220.7L669 224.5L671 210.4L672.5 204.9L674 203.5L677.5 203.5L683 210.5L683 316.8L678.5 314L671 305.4L670.5 305.1L666 312L660 317.4L653.5 320.5L641 320.4L629 314.4L621 305.4L620.5 305.1L616 312L610 317.4L603.5 320.5L591 320.4L579 314.4L571 305.4L570.5 305.1L566 312L560 317.4L553.5 320.5L541 320.4L529 314.4L521 305.4L520.5 305.1L516 312L510 317.4L503.5 320.5L491 320.4L479 314.4L471 305.4L470.5 305.1L466 312L460 317.4L453.5 320.5L441 320.4L429 314.4L421 305.4L420.5 305.1L416 312L410 317.4L403.5 320.5L391 320.4L379 314.4L371 305.4L370.5 305.1L366 312L360 317.4L353.5 320.5L341 320.4L329 314.4L321 305.4L320.5 305.1L316 312L310 317.4L303.5 320.5L291 320.4L279 314.4L271 305.4L270.5 305.1L266 312L260 317.4L253.5 320.5L241 320.4L229 314.4L221 305.4L220.5 305.1L216 312L210 317.4L203.5 320.5L191 320.4L179 314.4L171 305.4L170.5 305.1L166 312L160 317.4L153.5 320.5L141 320.4L129 314.4L121 305.4L120.5 305.1L116 312L110 317.4L103.5 320.5L91 320.4L83.5 317.1Z" fill="#acac00"/>
<path d="M83.5 213.4L89.5 219.9L94 222.9L119 226.7L121 212.6L122.5 207.1L124 205.7L127.5 205.7L139.5 219.9L144 222.9L169 226.7L171 212.6L172.5 207.1L174 205.7L177.5 205.7L189.5 219.9L194 222.9L219 226.7L221 212.6L222.5 207.1L224 205.7L227.5 205.7L239.5 219.9L244 222.9L269 226.7L271 212.6L272.5 207.1L274 205.7L277.5 205.7L289.5 219.9L294 222.9L319 226.7L321 212.6L322.5 207.1L324 205.7L327.5 205.7L339.5 219.9L344 222.9L369 226.7L371 212.6L372.5 207.1L374 205.7L377.5 205.7L389.5 219.9L394 222.9L419 226.7L421 212.6L422.5 207.1L424 205.7L427.5 205.7L439.5 219.9L444 222.9L469 226.7L471 212.6L472.5 207.1L474 205.7L477.5 205.7L489.5 219.9L494 222.9L519 226.7L521 212.6L522.5 207.1L524 205.7L527.5 205.7L539.5 219.9L544 222.9L569 226.7L571 212.6L572.5 207.1L574 205.7L577.5 205.7L589.5 219.9L594 222.9L619 226.7L621 212.6L622.5 207.1L624 205.7L627.5 205.7L639.5 219.9L644 222.9L669 226.7L671 212.6L672.5 207.1L674 205.7L677.5 205.7L683 212.7L683 304.8L678.5 302L671 293.4L670.5 293.1L666 300L660 305.4L653.5 308.5L641 308.4L629 302.4L621 293.4L620.5 293.1L616 300L610 305.4L603.5 308.5L591 308.4L579 302.4L571 293.4L570.5 293.1L566 300L560 305.4L553.5 308.5L541 308.4L529 302.4L521 293.4L520.5 293.1L516 300L510 305.4L503.5 308.5L491 308.4L479 302.4L471 293.4L470.5 293.1L466 300L460 305.4L453.5 308.5L441 308.4L429 302.4L421 293.4L420.5 293.1L416 300L410 305.4L403.5 308.5L391 308.4L379 302.4L371 293.4L370.5 293.1L366 300L360 305.4L353.5 308.5L341 308.4L329 302.4L321 293.4L320.5 293.1L316 300L310 305.4L303.5 308.5L291 308.4L279 302.4L271 293.4L270.5 293.1L266 300L260 305.4L253.5 308.5L241 308.4L229 302.4L221 293.4L220.5 293.1L216 300L210 305.4L203.5 308.5L191 308.4L179 302.4L171 293.4L170.5 293.1L166 300L160 305.4L153.5 308.5L141 308.4L129 302.4L121 293.4L120.5 293.1L116 300L110 305.4L103.5 308.5L91 308.4L83.5 305.1Z" fill="url(#gBL)"/>
<g clip-path="url(#bclip2)"><path d="M83.5 245L118.5 245L119 240L129 240L129.5 245L168.5 245L169 240L179 240L179.5 245L218.5 245L219 240L229 240L229.5 245L268.5 245L269 240L279 240L279.5 245L318.5 245L319 240L329 240L329.5 245L368.5 245L369 240L379 240L379.5 245L418.5 245L419 240L429 240L429.5 245L468.5 245L469 240L479 240L479.5 245L518.5 245L519 240L529 240L529.5 245L568.5 245L569 240L579 240L579.5 245L618.5 245L619 240L629 240L629.5 245L668.5 245L669 240L679 240L679.5 245L683 245L683 245L679.5 245L679 298.4L671 289.4L670.5 289.1L670 289.8L669.5 240L669 240L668.5 245L629.5 245L629 298.4L621 289.4L620.5 289.1L620 289.8L619.5 240L619 240L618.5 245L579.5 245L579 298.4L571 289.4L570.5 289.1L570 289.8L569.5 240L569 240L568.5 245L529.5 245L529 298.4L521 289.4L520.5 289.1L520 289.8L519.5 240L519 240L518.5 245L479.5 245L479 298.4L471 289.4L470.5 289.1L470 289.8L469.5 240L469 240L468.5 245L429.5 245L429 298.4L421 289.4L420.5 289.1L420 289.8L419.5 240L419 240L418.5 245L379.5 245L379 298.4L371 289.4L370.5 289.1L370 289.8L369.5 240L369 240L368.5 245L329.5 245L329 298.4L321 289.4L320.5 289.1L320 289.8L319.5 240L319 240L318.5 245L279.5 245L279 298.4L271 289.4L270.5 289.1L270 289.8L269.5 240L269 240L268.5 245L229.5 245L229 298.4L221 289.4L220.5 289.1L220 289.8L219.5 240L219 240L218.5 245L179.5 245L179 298.4L171 289.4L170.5 289.1L170 289.8L169.5 240L169 240L168.5 245L129.5 245L129 298.4L121 289.4L120.5 289.1L120 289.8L119.5 240L119 240L118.5 245L83.5 245Z" fill="#d8d800" filter="url(#soft)"/></g>
<path d="M83.5 213.4L89.5 219.9L94 222.9L119 226.7L121 212.6L122.5 207.1L124 205.7L127.5 205.7L139.5 219.9L144 222.9L169 226.7L171 212.6L172.5 207.1L174 205.7L177.5 205.7L189.5 219.9L194 222.9L219 226.7L221 212.6L222.5 207.1L224 205.7L227.5 205.7L239.5 219.9L244 222.9L269 226.7L271 212.6L272.5 207.1L274 205.7L277.5 205.7L289.5 219.9L294 222.9L319 226.7L321 212.6L322.5 207.1L324 205.7L327.5 205.7L339.5 219.9L344 222.9L369 226.7L371 212.6L372.5 207.1L374 205.7L377.5 205.7L389.5 219.9L394 222.9L419 226.7L421 212.6L422.5 207.1L424 205.7L427.5 205.7L439.5 219.9L444 222.9L469 226.7L471 212.6L472.5 207.1L474 205.7L477.5 205.7L489.5 219.9L494 222.9L519 226.7L521 212.6L522.5 207.1L524 205.7L527.5 205.7L539.5 219.9L544 222.9L569 226.7L571 212.6L572.5 207.1L574 205.7L577.5 205.7L589.5 219.9L594 222.9L619 226.7L621 212.6L622.5 207.1L624 205.7L627.5 205.7L639.5 219.9L644 222.9L669 226.7L671 212.6L672.5 207.1L674 205.7L677.5 205.7L683 212.7L683 235.8L670 226L669.5 244L644 244L620 226L619.5 244L594 244L570 226L569.5 244L544 244L520 226L519.5 244L494 244L470 226L469.5 244L444 244L420 226L419.5 244L394 244L370 226L369.5 244L344 244L320 226L319.5 244L294 244L270 226L269.5 244L244 244L220 226L219.5 244L194 244L170 226L169.5 244L144 244L120 226L119.5 244L94 244L83.5 236.1Z" fill="#f6f600"/>
<use href="#pmark"/>
</g>
<g transform="translate(802,482)" clip-path="url(#pc)">
<use href="#pstatic"/>
<clipPath id="bclip3"><path d="M83.5 193.2L89 203.3L97.5 214L110 221.4L120.5 223.8L121 223L124.5 192.5L125.5 189L126.5 188L130.5 187.8L139 203.3L147.5 214L160 221.4L170.5 223.8L171 223L174.5 192.5L175.5 189L176.5 188L180.5 187.8L189 203.3L197.5 214L210 221.4L220.5 223.8L221 223L224.5 192.5L225.5 189L226.5 188L230.5 187.8L239 203.3L247.5 214L260 221.4L270.5 223.8L271 223L274.5 192.5L275.5 189L276.5 188L280.5 187.8L289 203.3L297.5 214L310 221.4L320.5 223.8L321 223L324.5 192.5L325.5 189L326.5 188L330.5 187.8L339 203.3L347.5 214L360 221.4L370.5 223.8L371 223L374.5 192.5L375.5 189L376.5 188L380.5 187.8L389 203.3L397.5 214L410 221.4L420.5 223.8L421 223L424.5 192.5L425.5 189L426.5 188L430.5 187.8L439 203.3L447.5 214L460 221.4L470.5 223.8L471 223L474.5 192.5L475.5 189L476.5 188L480.5 187.8L489 203.3L497.5 214L510 221.4L520.5 223.8L521 223L524.5 192.5L525.5 189L526.5 188L530.5 187.8L539 203.3L547.5 214L560 221.4L570.5 223.8L571 223L574.5 192.5L575.5 189L576.5 188L580.5 187.8L589 203.3L597.5 214L610 221.4L620.5 223.8L621 223L624.5 192.5L625.5 189L626.5 188L630.5 187.8L639 203.3L647.5 214L660 221.4L670.5 223.8L671 223L674.5 192.5L675.5 189L676.5 188L680.5 187.8L683 192.3L683 336.8L673 318.8L667.5 335.1L659.5 346.5L651.5 351.8L645.5 350.5L634.5 339.3L623 318.8L617.5 335.1L609.5 346.5L601.5 351.8L595.5 350.5L584.5 339.3L573 318.8L567.5 335.1L559.5 346.5L551.5 351.8L545.5 350.5L534.5 339.3L523 318.8L517.5 335.1L509.5 346.5L501.5 351.8L495.5 350.5L484.5 339.3L473 318.8L467.5 335.1L459.5 346.5L451.5 351.8L445.5 350.5L434.5 339.3L423 318.8L417.5 335.1L409.5 346.5L401.5 351.8L395.5 350.5L384.5 339.3L373 318.8L367.5 335.1L359.5 346.5L351.5 351.8L345.5 350.5L334.5 339.3L323 318.8L317.5 335.1L309.5 346.5L301.5 351.8L295.5 350.5L284.5 339.3L273 318.8L267.5 335.1L259.5 346.5L251.5 351.8L245.5 350.5L234.5 339.3L223 318.8L217.5 335.1L209.5 346.5L201.5 351.8L195.5 350.5L184.5 339.3L173 318.8L167.5 335.1L159.5 346.5L151.5 351.8L145.5 350.5L134.5 339.3L123 318.8L117.5 335.1L109.5 346.5L101.5 351.8L95.5 350.5L84.5 339.3L83.5 337.6Z"/></clipPath>
<path d="M83.5 193.2L89 203.3L97.5 214L110 221.4L120.5 223.8L121 223L124.5 192.5L125.5 189L126.5 188L130.5 187.8L139 203.3L147.5 214L160 221.4L170.5 223.8L171 223L174.5 192.5L175.5 189L176.5 188L180.5 187.8L189 203.3L197.5 214L210 221.4L220.5 223.8L221 223L224.5 192.5L225.5 189L226.5 188L230.5 187.8L239 203.3L247.5 214L260 221.4L270.5 223.8L271 223L274.5 192.5L275.5 189L276.5 188L280.5 187.8L289 203.3L297.5 214L310 221.4L320.5 223.8L321 223L324.5 192.5L325.5 189L326.5 188L330.5 187.8L339 203.3L347.5 214L360 221.4L370.5 223.8L371 223L374.5 192.5L375.5 189L376.5 188L380.5 187.8L389 203.3L397.5 214L410 221.4L420.5 223.8L421 223L424.5 192.5L425.5 189L426.5 188L430.5 187.8L439 203.3L447.5 214L460 221.4L470.5 223.8L471 223L474.5 192.5L475.5 189L476.5 188L480.5 187.8L489 203.3L497.5 214L510 221.4L520.5 223.8L521 223L524.5 192.5L525.5 189L526.5 188L530.5 187.8L539 203.3L547.5 214L560 221.4L570.5 223.8L571 223L574.5 192.5L575.5 189L576.5 188L580.5 187.8L589 203.3L597.5 214L610 221.4L620.5 223.8L621 223L624.5 192.5L625.5 189L626.5 188L630.5 187.8L639 203.3L647.5 214L660 221.4L670.5 223.8L671 223L674.5 192.5L675.5 189L676.5 188L680.5 187.8L683 192.3L683 336.8L673 318.8L667.5 335.1L659.5 346.5L651.5 351.8L645.5 350.5L634.5 339.3L623 318.8L617.5 335.1L609.5 346.5L601.5 351.8L595.5 350.5L584.5 339.3L573 318.8L567.5 335.1L559.5 346.5L551.5 351.8L545.5 350.5L534.5 339.3L523 318.8L517.5 335.1L509.5 346.5L501.5 351.8L495.5 350.5L484.5 339.3L473 318.8L467.5 335.1L459.5 346.5L451.5 351.8L445.5 350.5L434.5 339.3L423 318.8L417.5 335.1L409.5 346.5L401.5 351.8L395.5 350.5L384.5 339.3L373 318.8L367.5 335.1L359.5 346.5L351.5 351.8L345.5 350.5L334.5 339.3L323 318.8L317.5 335.1L309.5 346.5L301.5 351.8L295.5 350.5L284.5 339.3L273 318.8L267.5 335.1L259.5 346.5L251.5 351.8L245.5 350.5L234.5 339.3L223 318.8L217.5 335.1L209.5 346.5L201.5 351.8L195.5 350.5L184.5 339.3L173 318.8L167.5 335.1L159.5 346.5L151.5 351.8L145.5 350.5L134.5 339.3L123 318.8L117.5 335.1L109.5 346.5L101.5 351.8L95.5 350.5L84.5 339.3L83.5 337.6Z" fill="#a2a200"/>
<path d="M83.5 194.7L89 204.8L97.5 215.5L110 222.9L120.5 225.3L121 224.5L124.5 194L125.5 190.5L126.5 189.5L130.5 189.3L139 204.8L147.5 215.5L160 222.9L170.5 225.3L171 224.5L174.5 194L175.5 190.5L176.5 189.5L180.5 189.3L189 204.8L197.5 215.5L210 222.9L220.5 225.3L221 224.5L224.5 194L225.5 190.5L226.5 189.5L230.5 189.3L239 204.8L247.5 215.5L260 222.9L270.5 225.3L271 224.5L274.5 194L275.5 190.5L276.5 189.5L280.5 189.3L289 204.8L297.5 215.5L310 222.9L320.5 225.3L321 224.5L324.5 194L325.5 190.5L326.5 189.5L330.5 189.3L339 204.8L347.5 215.5L360 222.9L370.5 225.3L371 224.5L374.5 194L375.5 190.5L376.5 189.5L380.5 189.3L389 204.8L397.5 215.5L410 222.9L420.5 225.3L421 224.5L424.5 194L425.5 190.5L426.5 189.5L430.5 189.3L439 204.8L447.5 215.5L460 222.9L470.5 225.3L471 224.5L474.5 194L475.5 190.5L476.5 189.5L480.5 189.3L489 204.8L497.5 215.5L510 222.9L520.5 225.3L521 224.5L524.5 194L525.5 190.5L526.5 189.5L530.5 189.3L539 204.8L547.5 215.5L560 222.9L570.5 225.3L571 224.5L574.5 194L575.5 190.5L576.5 189.5L580.5 189.3L589 204.8L597.5 215.5L610 222.9L620.5 225.3L621 224.5L624.5 194L625.5 190.5L626.5 189.5L630.5 189.3L639 204.8L647.5 215.5L660 222.9L670.5 225.3L671 224.5L674.5 194L675.5 190.5L676.5 189.5L680.5 189.3L683 193.8L683 320.8L673 302.8L667.5 319.1L659.5 330.5L651.5 335.8L645.5 334.5L634.5 323.3L623 302.8L617.5 319.1L609.5 330.5L601.5 335.8L595.5 334.5L584.5 323.3L573 302.8L567.5 319.1L559.5 330.5L551.5 335.8L545.5 334.5L534.5 323.3L523 302.8L517.5 319.1L509.5 330.5L501.5 335.8L495.5 334.5L484.5 323.3L473 302.8L467.5 319.1L459.5 330.5L451.5 335.8L445.5 334.5L434.5 323.3L423 302.8L417.5 319.1L409.5 330.5L401.5 335.8L395.5 334.5L384.5 323.3L373 302.8L367.5 319.1L359.5 330.5L351.5 335.8L345.5 334.5L334.5 323.3L323 302.8L317.5 319.1L309.5 330.5L301.5 335.8L295.5 334.5L284.5 323.3L273 302.8L267.5 319.1L259.5 330.5L251.5 335.8L245.5 334.5L234.5 323.3L223 302.8L217.5 319.1L209.5 330.5L201.5 335.8L195.5 334.5L184.5 323.3L173 302.8L167.5 319.1L159.5 330.5L151.5 335.8L145.5 334.5L134.5 323.3L123 302.8L117.5 319.1L109.5 330.5L101.5 335.8L95.5 334.5L84.5 323.3L83.5 321.6Z" fill="url(#gBR)"/>
<g clip-path="url(#bclip3)"><path d="M83.5 199.2L89 209.3L97.5 220L110 227.4L120.5 229.8L121 229L124.5 198.5L125.5 195L126.5 194L130.5 193.8L139 209.3L147.5 220L160 227.4L170.5 229.8L171 229L174.5 198.5L175.5 195L176.5 194L180.5 193.8L189 209.3L197.5 220L210 227.4L220.5 229.8L221 229L224.5 198.5L225.5 195L226.5 194L230.5 193.8L239 209.3L247.5 220L260 227.4L270.5 229.8L271 229L274.5 198.5L275.5 195L276.5 194L280.5 193.8L289 209.3L297.5 220L310 227.4L320.5 229.8L321 229L324.5 198.5L325.5 195L326.5 194L330.5 193.8L339 209.3L347.5 220L360 227.4L370.5 229.8L371 229L374.5 198.5L375.5 195L376.5 194L380.5 193.8L389 209.3L397.5 220L410 227.4L420.5 229.8L421 229L424.5 198.5L425.5 195L426.5 194L430.5 193.8L439 209.3L447.5 220L460 227.4L470.5 229.8L471 229L474.5 198.5L475.5 195L476.5 194L480.5 193.8L489 209.3L497.5 220L510 227.4L520.5 229.8L521 229L524.5 198.5L525.5 195L526.5 194L530.5 193.8L539 209.3L547.5 220L560 227.4L570.5 229.8L571 229L574.5 198.5L575.5 195L576.5 194L580.5 193.8L589 209.3L597.5 220L610 227.4L620.5 229.8L621 229L624.5 198.5L625.5 195L626.5 194L630.5 193.8L639 209.3L647.5 220L660 227.4L670.5 229.8L671 229L674.5 198.5L675.5 195L676.5 194L680.5 193.8L683 198.3L683 263.8L678 288.8L677.5 290L672.5 290L672 220.8L671 229L670.5 229.8L659.5 227.2L647.5 220L640 210.6L639.5 231.2L628 288.8L627.5 290L622.5 290L622 220.8L621 229L620.5 229.8L609.5 227.2L597.5 220L590 210.6L589.5 231.2L578 288.8L577.5 290L572.5 290L572 220.8L571 229L570.5 229.8L559.5 227.2L547.5 220L540 210.6L539.5 231.2L528 288.8L527.5 290L522.5 290L522 220.8L521 229L520.5 229.8L509.5 227.2L497.5 220L490 210.6L489.5 231.2L478 288.8L477.5 290L472.5 290L472 220.8L471 229L470.5 229.8L459.5 227.2L447.5 220L440 210.6L439.5 231.2L428 288.8L427.5 290L422.5 290L422 220.8L421 229L420.5 229.8L409.5 227.2L397.5 220L390 210.6L389.5 231.2L378 288.8L377.5 290L372.5 290L372 220.8L371 229L370.5 229.8L359.5 227.2L347.5 220L340 210.6L339.5 231.2L328 288.8L327.5 290L322.5 290L322 220.8L321 229L320.5 229.8L309.5 227.2L297.5 220L290 210.6L289.5 231.2L278 288.8L277.5 290L272.5 290L272 220.8L271 229L270.5 229.8L259.5 227.2L247.5 220L240 210.6L239.5 231.2L228 288.8L227.5 290L222.5 290L222 220.8L221 229L220.5 229.8L209.5 227.2L197.5 220L190 210.6L189.5 231.2L178 288.8L177.5 290L172.5 290L172 220.8L171 229L170.5 229.8L159.5 227.2L147.5 220L140 210.6L139.5 231.2L128 288.8L127.5 290L122.5 290L122 220.8L121 229L120.5 229.8L109.5 227.2L97.5 220L90 210.6L89.5 231.2L83.5 261.2Z" fill="#dede00" filter="url(#soft)"/><path d="M83.5 300L101.5 300L102 270L121.5 270L122 300L151.5 300L152 270L171.5 270L172 300L201.5 300L202 270L221.5 270L222 300L251.5 300L252 270L271.5 270L272 300L301.5 300L302 270L321.5 270L322 300L351.5 300L352 270L371.5 270L372 300L401.5 300L402 270L421.5 270L422 300L451.5 300L452 270L471.5 270L472 300L501.5 300L502 270L521.5 270L522 300L551.5 300L552 270L571.5 270L572 300L601.5 300L602 270L621.5 270L622 300L651.5 300L652 270L671.5 270L672 300L683 300L683 300L672 300L671.5 307.4L667.5 319.1L659.5 330.5L652 335.5L651.5 300L622 300L621.5 307.4L617.5 319.1L609.5 330.5L602 335.5L601.5 300L572 300L571.5 307.4L567.5 319.1L559.5 330.5L552 335.5L551.5 300L522 300L521.5 307.4L517.5 319.1L509.5 330.5L502 335.5L501.5 300L472 300L471.5 307.4L467.5 319.1L459.5 330.5L452 335.5L451.5 300L422 300L421.5 307.4L417.5 319.1L409.5 330.5L402 335.5L401.5 300L372 300L371.5 307.4L367.5 319.1L359.5 330.5L352 335.5L351.5 300L322 300L321.5 307.4L317.5 319.1L309.5 330.5L302 335.5L301.5 300L272 300L271.5 307.4L267.5 319.1L259.5 330.5L252 335.5L251.5 300L222 300L221.5 307.4L217.5 319.1L209.5 330.5L202 335.5L201.5 300L172 300L171.5 307.4L167.5 319.1L159.5 330.5L152 335.5L151.5 300L122 300L121.5 307.4L117.5 319.1L109.5 330.5L102 335.5L101.5 300L83.5 300Z" fill="#b4b400" filter="url(#soft)"/></g>
<path d="M83.5 194.7L89 204.8L97.5 215.5L110 222.9L120.5 225.3L121 224.5L124.5 194L125.5 190.5L126.5 189.5L130.5 189.3L139 204.8L147.5 215.5L160 222.9L170.5 225.3L171 224.5L174.5 194L175.5 190.5L176.5 189.5L180.5 189.3L189 204.8L197.5 215.5L210 222.9L220.5 225.3L221 224.5L224.5 194L225.5 190.5L226.5 189.5L230.5 189.3L239 204.8L247.5 215.5L260 222.9L270.5 225.3L271 224.5L274.5 194L275.5 190.5L276.5 189.5L280.5 189.3L289 204.8L297.5 215.5L310 222.9L320.5 225.3L321 224.5L324.5 194L325.5 190.5L326.5 189.5L330.5 189.3L339 204.8L347.5 215.5L360 222.9L370.5 225.3L371 224.5L374.5 194L375.5 190.5L376.5 189.5L380.5 189.3L389 204.8L397.5 215.5L410 222.9L420.5 225.3L421 224.5L424.5 194L425.5 190.5L426.5 189.5L430.5 189.3L439 204.8L447.5 215.5L460 222.9L470.5 225.3L471 224.5L474.5 194L475.5 190.5L476.5 189.5L480.5 189.3L489 204.8L497.5 215.5L510 222.9L520.5 225.3L521 224.5L524.5 194L525.5 190.5L526.5 189.5L530.5 189.3L539 204.8L547.5 215.5L560 222.9L570.5 225.3L571 224.5L574.5 194L575.5 190.5L576.5 189.5L580.5 189.3L589 204.8L597.5 215.5L610 222.9L620.5 225.3L621 224.5L624.5 194L625.5 190.5L626.5 189.5L630.5 189.3L639 204.8L647.5 215.5L660 222.9L670.5 225.3L671 224.5L674.5 194L675.5 190.5L676.5 189.5L680.5 189.3L683 193.8L683 198.3L680.5 193.8L677 193.8L675.5 195L674.5 198.5L671 229L670.5 229.8L659.5 227.2L647.5 220L638.5 208.5L630.5 193.8L627 193.8L625.5 195L624.5 198.5L621 229L620.5 229.8L609.5 227.2L597.5 220L588.5 208.5L580.5 193.8L577 193.8L575.5 195L574.5 198.5L571 229L570.5 229.8L559.5 227.2L547.5 220L538.5 208.5L530.5 193.8L527 193.8L525.5 195L524.5 198.5L521 229L520.5 229.8L509.5 227.2L497.5 220L488.5 208.5L480.5 193.8L477 193.8L475.5 195L474.5 198.5L471 229L470.5 229.8L459.5 227.2L447.5 220L438.5 208.5L430.5 193.8L427 193.8L425.5 195L424.5 198.5L421 229L420.5 229.8L409.5 227.2L397.5 220L388.5 208.5L380.5 193.8L377 193.8L375.5 195L374.5 198.5L371 229L370.5 229.8L359.5 227.2L347.5 220L338.5 208.5L330.5 193.8L327 193.8L325.5 195L324.5 198.5L321 229L320.5 229.8L309.5 227.2L297.5 220L288.5 208.5L280.5 193.8L277 193.8L275.5 195L274.5 198.5L271 229L270.5 229.8L259.5 227.2L247.5 220L238.5 208.5L230.5 193.8L227 193.8L225.5 195L224.5 198.5L221 229L220.5 229.8L209.5 227.2L197.5 220L188.5 208.5L180.5 193.8L177 193.8L175.5 195L174.5 198.5L171 229L170.5 229.8L159.5 227.2L147.5 220L138.5 208.5L130.5 193.8L127 193.8L125.5 195L124.5 198.5L121 229L120.5 229.8L109.5 227.2L97.5 220L88.5 208.5L83.5 199.2Z" fill="#e8e800"/>
<use href="#pmark"/>
</g>
<rect x="799" y="0" width="2" height="960" fill="#fff"/>
<rect x="0" y="479" width="1600" height="2" fill="#fff"/>
</svg>
</body></html>
